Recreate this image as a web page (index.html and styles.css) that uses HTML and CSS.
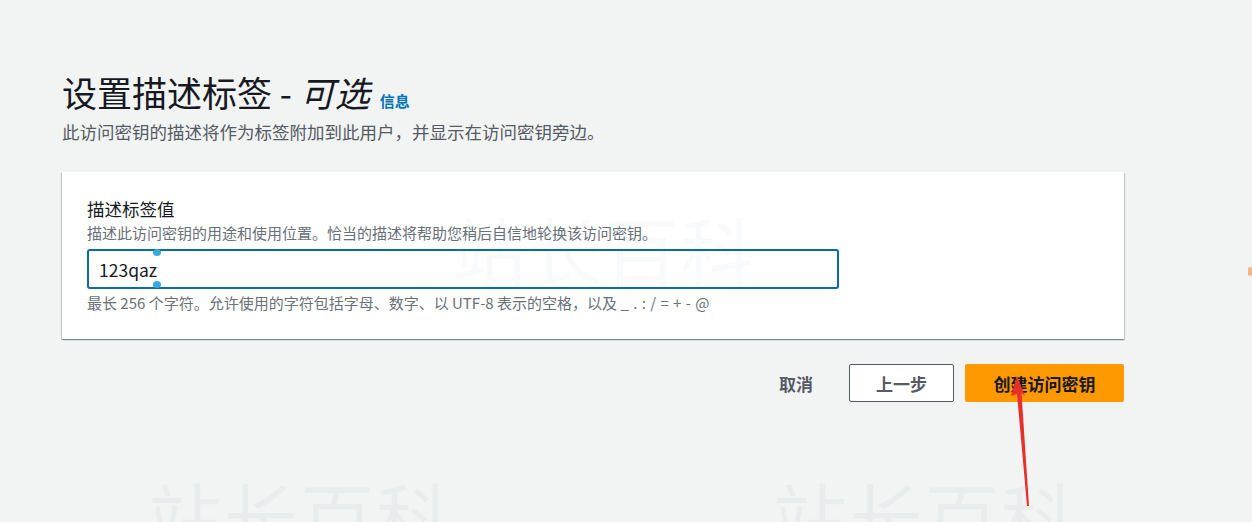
FILE: index.html
```html
<!DOCTYPE html>
<html lang="zh-CN">
<head>
<meta charset="utf-8">
<title>设置描述标签</title>
<link rel="stylesheet" href="styles.css">
</head>
<body>
<main class="page">
  <header class="head">
    <h1 class="title"><span>设置描述标签 - <i class="opt">可选</i></span><a class="info" href="#">信息</a></h1>
    <p class="subtitle">此访问密钥的描述将作为标签附加到此用户，并显示在访问密钥旁边。</p>
  </header>

  <section class="card">
    <div class="field">
      <label class="label" for="desc">描述标签值</label>
      <div class="desc">描述此访问密钥的用途和使用位置。恰当的描述将帮助您稍后自信地轮换该访问密钥。</div>
      <div class="input-wrap">
        <input id="desc" class="input" type="text" value="123qaz">
        <span class="handle handle-top"></span>
        <span class="handle handle-bottom"></span>
      </div>
      <div class="hint">最长 256 个字符。允许使用的字符包括字母、数字、以 UTF-8 表示的空格，以及 <span class="chars">_ . : / = + - @</span></div>
    </div>
  </section>

  <div class="actions">
    <button class="btn-link" type="button">取消</button>
    <button class="btn-normal" type="button">上一步</button>
    <button class="btn-primary" type="button">创建访问密钥</button>
  </div>
</main>

<div class="wm wm-card">站长百科</div>
<div class="wm wm-bl">站长百科</div>
<div class="wm wm-br">站长百科</div>
<span class="edge-dot"></span>

<svg class="arrow" width="1252" height="522" viewBox="0 0 1252 522" aria-hidden="true">
  <polygon points="1017,376 1025,396 1021.5,393 1029,506 1027,506 1017,394 1011,396" fill="#e8302a"/>
</svg>
</body>
</html>
```

FILE: styles.css
```css
html, body {
  margin: 0;
  padding: 0;
}
body {
  background: #f2f3f3;
  font-family: "Noto Sans CJK SC", "Noto Sans", sans-serif;
  color: #16191f;
  width: 1252px;
  height: 522px;
  overflow: hidden;
  position: relative;
}
.page {
  width: 1062px;
  margin-left: 62px;
  padding-top: 71px;
}
.head {
  margin: 0;
}
.title {
  margin: 0;
  display: flex;
  align-items: baseline;
  gap: 10px;
  height: 42px;
  font-size: 35px;
  line-height: 42px;
  font-weight: 400;
  color: #16191f;
}
.opt {
  font-style: italic;
}
.info {
  font-size: 15px;
  line-height: 20px;
  font-weight: 700;
  color: #0073bb;
  text-decoration: none;
}
.subtitle {
  margin: 7px 0 0;
  font-size: 17.5px;
  line-height: 24px;
  color: #545b64;
}
.card {
  margin-top: 28px;
  background: #fff;
  padding: 25px 25px 26px;
  box-shadow: 0 1px 1px 0 rgba(0, 28, 36, 0.3), 1px 1px 1px 0 rgba(0, 28, 36, 0.15), -1px 1px 1px 0 rgba(0, 28, 36, 0.15);
}
.field {
  display: flex;
  flex-direction: column;
}
.label {
  font-size: 17.5px;
  line-height: 24px;
  color: #16191f;
}
.desc {
  margin-top: 2px;
  font-size: 15px;
  line-height: 20px;
  color: #687078;
}
.input-wrap {
  position: relative;
  margin-top: 6px;
  width: 752px;
  height: 40px;
}
.input {
  box-sizing: border-box;
  width: 752px;
  height: 40px;
  border: 2px solid #0b6aa2;
  border-radius: 3px;
  padding: 0 10px;
  font-family: "Noto Sans CJK SC", "Noto Sans", sans-serif;
  font-size: 17.5px;
  color: #16191f;
  background: #fff;
  outline: none;
}
.handle {
  position: absolute;
  left: 66px;
  width: 8px;
  height: 7px;
  border-radius: 50%;
  background: #36a9e1;
}
.handle-top {
  top: 0;
}
.handle-bottom {
  bottom: 1px;
}
.hint {
  margin-top: 4px;
  font-size: 15px;
  line-height: 20px;
  color: #687078;
}
.chars {
  word-spacing: 1px;
}
.actions {
  margin-top: 25px;
  display: flex;
  justify-content: flex-end;
  align-items: center;
}
.btn-link,
.btn-normal,
.btn-primary {
  font-family: "Noto Sans CJK SC", "Noto Sans", sans-serif;
  font-size: 17px;
  font-weight: 700;
  height: 38px;
  border-radius: 2px;
  cursor: pointer;
  padding: 0;
}
.btn-link {
  background: transparent;
  border: none;
  color: #545b64;
  width: 36px;
  margin-right: 35px;
}
.btn-normal {
  background: #fff;
  border: 1px solid #545b64;
  color: #545b64;
  width: 105px;
  margin-right: 11px;
}
.btn-primary {
  background: #ff9900;
  border: none;
  color: #16191f;
  width: 159px;
}
.wm {
  position: absolute;
  font-family: "Noto Sans CJK SC", sans-serif;
  font-size: 74px;
  line-height: 80px;
  letter-spacing: 2px;
  color: rgba(0, 60, 90, 0.022);
  pointer-events: none;
  white-space: nowrap;
}
.wm-card {
  left: 452px;
  top: 208px;
}
.wm-bl {
  left: 148px;
  top: 474px;
  color: rgba(0, 60, 90, 0.035);
}
.wm-br {
  left: 773px;
  top: 474px;
  color: rgba(0, 60, 90, 0.035);
}
.edge-dot {
  position: absolute;
  left: 1248px;
  top: 267px;
  width: 4px;
  height: 9px;
  border-radius: 3px;
  background: #f2b68c;
}
.arrow {
  position: absolute;
  left: 0;
  top: 0;
  pointer-events: none;
}
```
